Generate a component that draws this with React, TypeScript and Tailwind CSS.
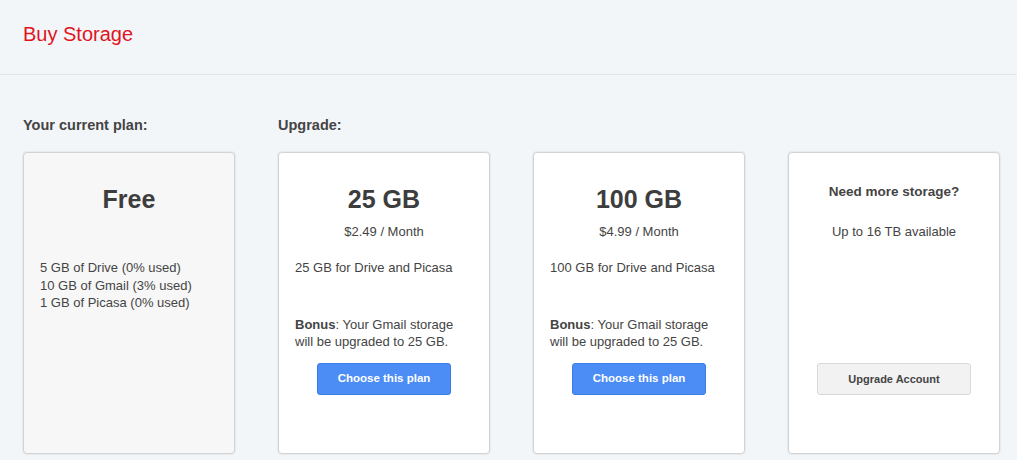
const font = { fontFamily: '"Liberation Sans", Arial, sans-serif' }

interface Plan {
  titulo: string
  preco: string
  descricao: string
}

const planos: Plan[] = [
  { titulo: '25 GB', preco: '$2.49 / Month', descricao: '25 GB for Drive and Picasa' },
  { titulo: '100 GB', preco: '$4.99 / Month', descricao: '100 GB for Drive and Picasa' },
]

const cartao =
  'h-[302px] rounded-[4px] border border-[#d3d3d3] shadow-[0_0_1px_1px_rgba(0,0,0,0.05)] px-[16px]'

function CartaoPlano({ plano }: { plano: Plan }) {
  return (
    <div className={`${cartao} bg-white pt-[31px]`}>
      <div className="text-center text-[25px] leading-[30px] font-bold text-[#3d3d3d]">{plano.titulo}</div>
      <div className="mt-[9px] text-center text-[13px] leading-[17px]">{plano.preco}</div>
      <div className="mt-[19px] text-[13px] leading-[17px]">{plano.descricao}</div>
      <p className="mt-[40px] text-[13px] leading-[17px]">
        <b>Bonus</b>: Your Gmail storage will be upgraded to 25 GB.
      </p>
      <div className="mt-[13px] flex justify-center">
        <button className="h-[32px] w-[134px] rounded-[3px] border border-[#3a7de6] bg-[#4b8cf5] text-[11.5px] font-bold text-white">
          Choose this plan
        </button>
      </div>
    </div>
  )
}

export default function App() {
  return (
    <div className="min-h-[460px] bg-[#f3f6f9] text-[#444]" style={font}>
      <div className="h-[75px] border-b border-[#e3e6e9] px-[23px] pt-[22px]">
        <h1 className="text-[20px] leading-[24px] text-[#e0141e]">Buy Storage</h1>
      </div>

      <div className="grid grid-cols-[repeat(4,212px)] gap-x-[43px] px-[23px] pt-[42px]">
        <div className="text-[14.5px] leading-[16px] font-bold">Your current plan:</div>
        <div className="col-span-3 text-[14.5px] leading-[16px] font-bold">Upgrade:</div>

        <div className={`${cartao} mt-[19px] bg-[#f7f7f7] pt-[31px]`}>
          <div className="text-center text-[25px] leading-[30px] font-bold text-[#3d3d3d]">Free</div>
          <div className="mt-[45px] text-[13px] leading-[17.5px]">
            <div>5 GB of Drive (0% used)</div>
            <div>10 GB of Gmail (3% used)</div>
            <div>1 GB of Picasa (0% used)</div>
          </div>
        </div>

        {planos.map(p => (
          <div key={p.titulo} className="mt-[19px]">
            <CartaoPlano plano={p} />
          </div>
        ))}

        <div className={`${cartao} mt-[19px] bg-white pt-[30px]`}>
          <div className="text-center text-[13.5px] leading-[17px] font-bold">Need more storage?</div>
          <div className="mt-[23px] text-center text-[13px] leading-[17px]">Up to 16 TB available</div>
          <div className="mt-[123px] flex justify-center">
            <button className="h-[32px] w-[154px] rounded-[3px] border border-[#d9d9d9] bg-[#f2f2f2] text-[11px] font-bold text-[#444]">
              Upgrade Account
            </button>
          </div>
        </div>
      </div>
    </div>
  )
}
